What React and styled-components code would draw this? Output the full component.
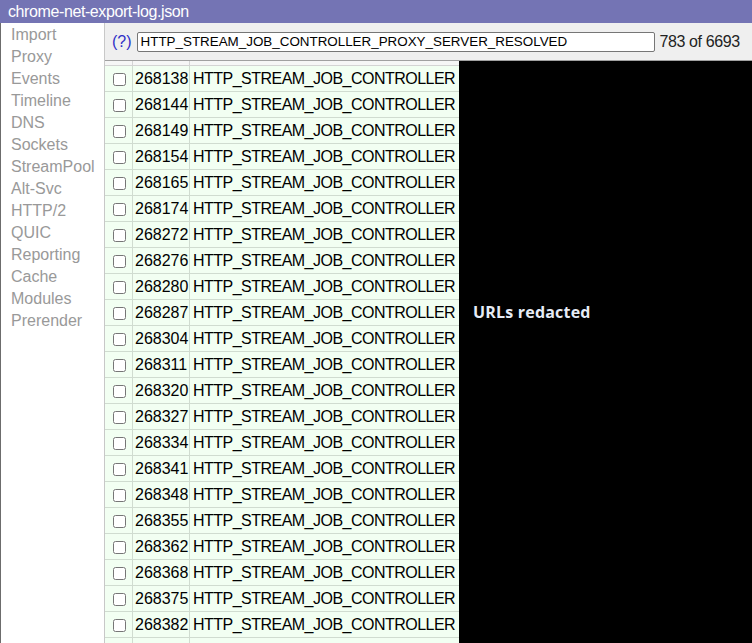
import { createGlobalStyle, styled } from "styled-components"

const GlobalStyle = createGlobalStyle`
  html, body {
    margin: 0;
    padding: 0;
    background: white;
  }
  body {
    font-family: "Liberation Sans", Arial, sans-serif;
    font-size: 16px;
  }
`

const Page = styled.div`
  display: flex;
  flex-direction: column;
  width: 752px;
  height: 643px;
  overflow: hidden;
`

const TitleBar = styled.div`
  height: 23px;
  line-height: 23px;
  padding-left: 8px;
  background: #7474b4;
  color: white;
  font-size: 16px;
  letter-spacing: -0.4px;
  white-space: nowrap;
`

const Body = styled.div`
  display: flex;
  flex: 1;
  min-height: 0;
  border-left: 1px solid #6c6c6c;
`

const Sidebar = styled.div`
  width: 93px;
  flex-shrink: 0;
  padding: 1px 0 0 10px;
  border-right: 1px solid #c8c8c8;
  display: flex;
  flex-direction: column;
`

const NavItem = styled.div`
  height: 22px;
  line-height: 22px;
  color: #999;
  white-space: nowrap;
`

const Main = styled.div`
  display: flex;
  flex-direction: column;
  flex: 1;
  min-width: 0;
`

const TopBar = styled.div`
  height: 37px;
  flex-shrink: 0;
  display: flex;
  align-items: center;
  gap: 5px;
  padding-left: 7px;
  background: #efefef;
  border-bottom: 1px solid #a0a0a0;
`

const HelpLink = styled.span`
  color: #3030c8;
  font-size: 16px;
`

const FilterInput = styled.input`
  width: 518px;
  height: 20px;
  box-sizing: border-box;
  padding: 0 3px;
  border: 1px solid #767676;
  border-radius: 2px;
  font-family: "Liberation Sans", Arial, sans-serif;
  font-size: 13.4px;
  color: black;
  background: white;
`

const Count = styled.span`
  color: #222;
  letter-spacing: -0.4px;
  white-space: nowrap;
`

const Content = styled.div`
  display: flex;
  flex: 1;
  min-height: 0;
`

const TableWrap = styled.div`
  width: 354px;
  flex-shrink: 0;
  overflow: hidden;
`

const Table = styled.table`
  border-collapse: collapse;
  table-layout: fixed;
  width: 355px;
  margin-left: -1px;
`

const HeadCell = styled.th`
  height: 4px;
  padding: 0;
  background: #f6f6f6;
  border: 1px solid #d4d4d4;
  border-top: none;
`

const Cell = styled.td`
  height: 25px;
  padding: 0 ${(props) => (props.$align === "right" ? "2px" : "3px")};
  background: #f2fff2;
  border: 1px solid #d0dcd0;
  text-align: ${(props) => props.$align || "left"};
  letter-spacing: ${(props) => (props.$tight ? "-0.52px" : "normal")};
  white-space: nowrap;
  overflow: hidden;
  color: black;
  line-height: 25px;
`

const CheckCell = styled(Cell)`
  padding: 0 0 0 2px;
  text-align: center;
`

const Checkbox = styled.input`
  margin: 0;
  width: 13px;
  height: 13px;
  vertical-align: middle;
`

const Panel = styled.div`
  flex: 1;
  background: black;
  display: flex;
  align-items: center;
  padding: 0 0 80px 14px;
`

const Redacted = styled.span`
  color: #e6ecf6;
  font-family: "Open Sans", "DejaVu Sans", sans-serif;
  font-weight: 700;
  font-size: 16px;
  letter-spacing: 0.2px;
`

const navItems = [
  "Import",
  "Proxy",
  "Events",
  "Timeline",
  "DNS",
  "Sockets",
  "StreamPool",
  "Alt-Svc",
  "HTTP/2",
  "QUIC",
  "Reporting",
  "Cache",
  "Modules",
  "Prerender",
]

const ids = [
  268138, 268144, 268149, 268154, 268165, 268174, 268272, 268276, 268280, 268287, 268304,
  268311, 268320, 268327, 268334, 268341, 268348, 268355, 268362, 268368, 268375, 268382,
  268389,
]

export default function App() {
  return (
    <>
      <GlobalStyle />
      <Page>
        <TitleBar>chrome-net-export-log.json</TitleBar>
        <Body>
          <Sidebar>
            {navItems.map((item) => (
              <NavItem key={item}>{item}</NavItem>
            ))}
          </Sidebar>
          <Main>
            <TopBar>
              <HelpLink>(?)</HelpLink>
              <FilterInput type="text" defaultValue="HTTP_STREAM_JOB_CONTROLLER_PROXY_SERVER_RESOLVED" />
              <Count>783 of 6693</Count>
            </TopBar>
            <Content>
              <TableWrap>
                <Table>
                  <colgroup>
                    <col style={{ width: 28 }} />
                    <col style={{ width: 57 }} />
                    <col style={{ width: 270 }} />
                  </colgroup>
                  <thead>
                    <tr>
                      <HeadCell />
                      <HeadCell />
                      <HeadCell />
                    </tr>
                  </thead>
                  <tbody>
                    {ids.map((id) => (
                      <tr key={id}>
                        <CheckCell>
                          <Checkbox type="checkbox" />
                        </CheckCell>
                        <Cell $align="right">{id}</Cell>
                        <Cell $tight>HTTP_STREAM_JOB_CONTROLLER</Cell>
                      </tr>
                    ))}
                  </tbody>
                </Table>
              </TableWrap>
              <Panel>
                <Redacted>URLs redacted</Redacted>
              </Panel>
            </Content>
          </Main>
        </Body>
      </Page>
    </>
  )
}
